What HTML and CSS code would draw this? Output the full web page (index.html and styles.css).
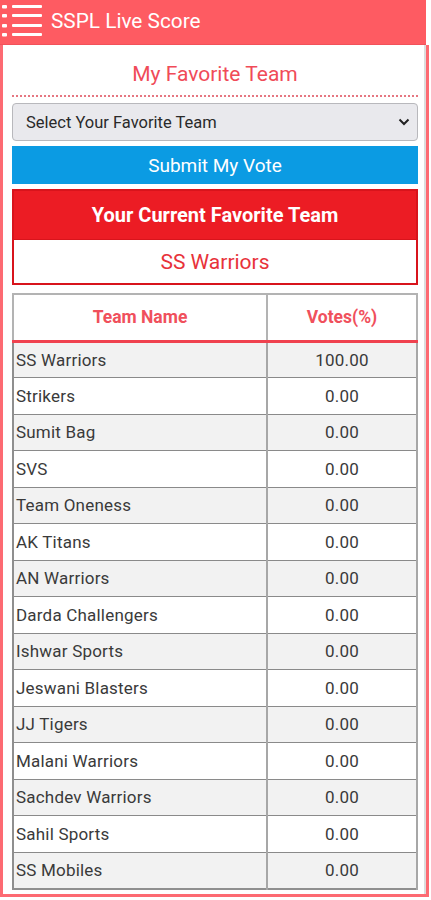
FILE: index.html
```html
<!DOCTYPE html>
<html>
<head>
<meta charset="utf-8">
<link rel="stylesheet" href="styles.css">
</head>
<body>
<div class="app">
  <header class="topbar">
    <svg class="menu" width="44" height="44" viewBox="0 0 44 44">
      <g fill="#fff">
        <rect x="2" y="5" width="5" height="3.5" rx="1"/>
        <rect x="2" y="14" width="5" height="3.5" rx="1"/>
        <rect x="2" y="24" width="5" height="3.5" rx="1"/>
        <rect x="2" y="33" width="5" height="3.5" rx="1"/>
        <rect x="12" y="5" width="30" height="3" rx="1"/>
        <rect x="12" y="14" width="30" height="3" rx="1"/>
        <rect x="12" y="24" width="30" height="3" rx="1"/>
        <rect x="12" y="33" width="30" height="3" rx="1"/>
      </g>
    </svg>
    <span class="brand">SSPL Live Score</span>
  </header>
  <main class="content">
    <h2 class="section-title">My Favorite Team</h2>
    <div class="select-box">
      <span>Select Your Favorite Team</span>
      <svg width="12" height="8" viewBox="0 0 12 8"><path d="M1.5 1.5 L6 6 L10.5 1.5" fill="none" stroke="#222" stroke-width="2"/></svg>
    </div>
    <button class="submit">Submit My Vote</button>
    <div class="current-head">Your Current Favorite Team</div>
    <div class="current-team">SS Warriors</div>
    <table class="votes">
      <thead>
        <tr><th class="c1">Team Name</th><th class="c2">Votes(%)</th></tr>
      </thead>
      <tbody>
        <tr><td>SS Warriors</td><td class="num">100.00</td></tr>
        <tr><td>Strikers</td><td class="num">0.00</td></tr>
        <tr><td>Sumit Bag</td><td class="num">0.00</td></tr>
        <tr><td>SVS</td><td class="num">0.00</td></tr>
        <tr><td>Team Oneness</td><td class="num">0.00</td></tr>
        <tr><td>AK Titans</td><td class="num">0.00</td></tr>
        <tr><td>AN Warriors</td><td class="num">0.00</td></tr>
        <tr><td>Darda Challengers</td><td class="num">0.00</td></tr>
        <tr><td>Ishwar Sports</td><td class="num">0.00</td></tr>
        <tr><td>Jeswani Blasters</td><td class="num">0.00</td></tr>
        <tr><td>JJ Tigers</td><td class="num">0.00</td></tr>
        <tr><td>Malani Warriors</td><td class="num">0.00</td></tr>
        <tr><td>Sachdev Warriors</td><td class="num">0.00</td></tr>
        <tr><td>Sahil Sports</td><td class="num">0.00</td></tr>
        <tr><td>SS Mobiles</td><td class="num">0.00</td></tr>
      </tbody>
    </table>
  </main>
</div>
</body>
</html>
```
FILE: styles.css
```css
* { box-sizing: border-box; }
html, body { margin: 0; padding: 0; background: #fff; }
body { font-family: Roboto, "Liberation Sans", Arial, sans-serif; width: 431px; height: 900px; overflow: hidden; }
.app { width: 430px; }
.topbar {
  height: 45px;
  width: 426px;
  background: #fe5b62;
  border-bottom: 1px solid #f2525a;
  display: flex;
  align-items: center;
}
.menu { flex: none; }
.brand { color: #fff; font-size: 20.8px; margin-left: 7px; margin-top: -3px; }
.content {
  width: 429px;
  border: 3px solid #fd6a72;
  border-top: none;
  box-shadow: inset -2px 0 0 #ddd;
  padding: 0 8px 6px 9px;
  height: 852px;
}
.section-title {
  margin: 0;
  height: 52px;
  font-weight: normal;
  font-size: 21px;
  color: #f04b58;
  text-align: center;
  padding-top: 17px;
  border-bottom: 2px dotted #e67681;
}
.select-box {
  margin-top: 6px;
  height: 38px;
  background: #e9e9ed;
  border: 1px solid #b8b8bc;
  border-radius: 4px;
  display: flex;
  align-items: center;
  justify-content: space-between;
  padding: 0 7px 0 13px;
  font-size: 16.5px;
  color: #2a2a2a;
}
.submit {
  display: block;
  width: 100%;
  margin-top: 5px;
  height: 38px;
  border: none;
  background: #0b9be3;
  color: #fff;
  font-family: inherit;
  font-size: 19px;
  padding: 0;
}
.current-head {
  margin-top: 5px;
  height: 50px;
  background: #ec1c24;
  border: 2px solid #d8141c;
  border-bottom: none;
  color: #fff;
  font-size: 20px;
  font-weight: bold;
  display: flex;
  align-items: center;
  justify-content: center;
}
.current-team {
  height: 46px;
  border: 2px solid #d8141c;
  border-top: 1px solid #d8141c;
  color: #e8323a;
  font-size: 21px;
  display: flex;
  align-items: center;
  justify-content: center;
}
.votes {
  margin-top: 8px;
  width: 100%;
  border-collapse: collapse;
  border: 2px solid #8f8f8f;
  font-size: 17px;
  letter-spacing: 0.2px;
  color: #3a3a3a;
}
.votes th {
  height: 47px;
  color: #f0505c;
  font-size: 17.5px;
  font-weight: bold;
  border: 2px solid #b3b3b3;
  border-bottom: 3px solid #f0424f;
  letter-spacing: 0;
}
.votes th.c1 { width: 254px; }
.votes td {
  height: 36.5px;
  padding: 0 0 0 2px;
  border: 1px solid #8a8a8a;
  border-right: 2px solid #a7a7a7;
}
.votes td.num { text-align: center; padding: 0; }
.votes tbody tr:nth-child(odd) td { background: #f2f2f2; }
.votes tbody tr:nth-child(even) td { background: #fff; }
```
